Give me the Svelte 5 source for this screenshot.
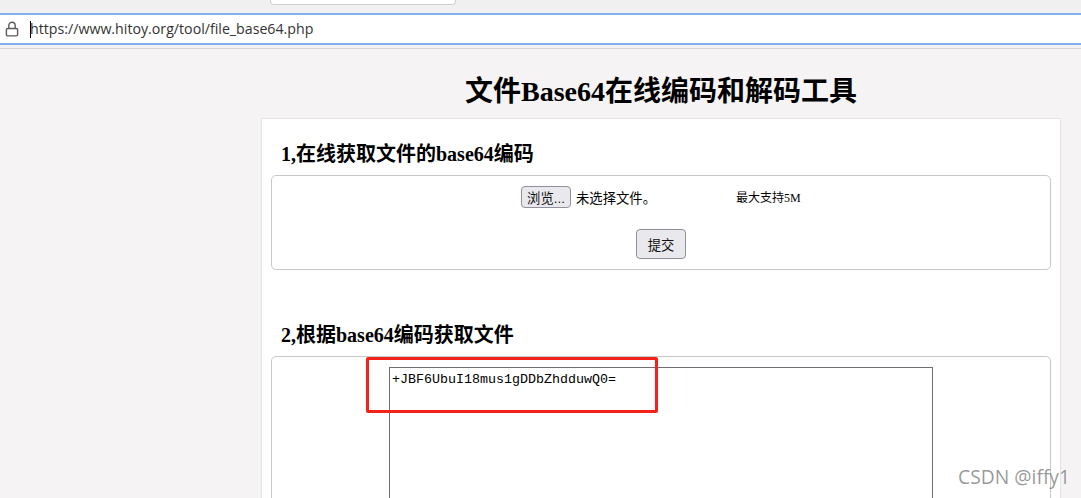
<script lang="ts">
  const url = 'https://www.hitoy.org/tool/file_base64.php';
  const code = '+JBF6UbuI18mus1gDDbZhdduwQ0=';
</script>

<div class="screen">
  <div class="tabstrip">
    <div class="tab"></div>
  </div>
  <div class="urlbar">
    <svg class="lock" width="14" height="16" viewBox="0 0 14 16" fill="none" stroke="#5c5c5c" stroke-width="1.4">
      <path d="M3.8 7.5V4.4a3.2 3.2 0 0 1 6.4 0v3.1" />
      <rect x="1.4" y="7.5" width="11.2" height="7.4" rx="1.4" />
    </svg>
    <span class="caret"></span>
    <span class="url">{url}</span>
  </div>
  <div class="toolbar-gap"></div>

  <main class="page">
    <h1>文件Base64在线编码和解码工具</h1>
    <section class="panel">
      <h2 class="first">1,在线获取文件的base64编码</h2>
      <div class="box upload">
        <div class="file-row">
          <button type="button" class="btn browse">浏览...</button>
          <span class="nofile">未选择文件。</span>
          <span class="limit">最大支持5M</span>
        </div>
        <button type="button" class="btn submit">提交</button>
      </div>

      <h2 class="second">2,根据base64编码获取文件</h2>
      <div class="box decode">
        <div class="textarea">{code}</div>
      </div>
    </section>
  </main>

  <div class="highlight"></div>
  <div class="watermark">CSDN @iffy1</div>
</div>

<style>
  :global(body) {
    margin: 0;
    background: #f5f3f4;
  }

  .screen {
    position: relative;
    width: 1081px;
    height: 498px;
    overflow: hidden;
    background: #f5f3f4;
    font-family: "Liberation Serif", "Noto Sans CJK SC", serif;
    color: #000;
  }

  .tabstrip {
    height: 13px;
    background: #f0f0f0;
    padding-left: 270px;
  }

  .tab {
    width: 184px;
    height: 4px;
    background: #fff;
    border: 1px solid #d0d0d0;
    border-top: none;
    border-radius: 0 0 4px 4px;
  }

  .urlbar {
    display: flex;
    align-items: center;
    height: 28px;
    background: #fff;
    border-top: 2px solid #7fb0ea;
    border-bottom: 2px solid #7fb0ea;
    padding-left: 5px;
  }

  .lock {
    flex: none;
  }

  .caret {
    width: 1px;
    height: 17px;
    margin-left: 11px;
    background: #000;
  }

  .url {
    font-family: "Open Sans", "Noto Sans", sans-serif;
    font-size: 14.2px;
    line-height: 28px;
    height: 28px;
    color: #333;
    margin-left: -1px;
  }

  .toolbar-gap {
    height: 3px;
    border-bottom: 1px solid #d6d6d6;
    background: #f3f3f3;
  }

  .page {
    padding-left: 261px;
  }

  h1 {
    margin: 0;
    width: 800px;
    height: 69px;
    box-sizing: border-box;
    padding-top: 24px;
    text-align: center;
    font-size: 28px;
    line-height: 38px;
    font-weight: bold;
  }

  .panel {
    width: 800px;
    height: 400px;
    box-sizing: border-box;
    background: #fff;
    border: 1px solid #e4e4e4;
    padding: 0 9px;
  }

  h2 {
    margin: 0;
    padding-left: 10px;
    font-size: 20px;
    line-height: 24px;
    font-weight: bold;
  }

  h2.first {
    padding-top: 23px;
    height: 56px;
    box-sizing: border-box;
  }

  h2.second {
    padding-top: 53px;
    height: 86px;
    box-sizing: border-box;
  }

  .box {
    width: 780px;
    box-sizing: border-box;
    border: 1px solid #c8c8c8;
    border-radius: 5px;
  }

  .upload {
    height: 95px;
    display: flex;
    flex-direction: column;
    align-items: center;
    padding-top: 10px;
  }

  .file-row {
    display: flex;
    align-items: center;
    width: 280px;
    font-size: 13.33px;
    height: 22px;
  }

  .btn {
    font-family: "Liberation Sans", "Noto Sans CJK SC", sans-serif;
    font-size: 13.33px;
    color: #111;
    background: #e9e9ed;
    border: 1px solid #8f8f9d;
    border-radius: 4px;
    padding: 0;
  }

  .browse {
    width: 50px;
    height: 22px;
  }

  .nofile {
    margin-left: 5px;
    font-family: "Noto Sans CJK SC", sans-serif;
    width: 160px;
  }

  .limit {
    font-size: 12px;
    white-space: nowrap;
  }

  .submit {
    width: 50px;
    height: 30px;
    margin-top: 21px;
  }

  .decode {
    height: 200px;
    padding: 10px 0 0 117px;
  }

  .textarea {
    width: 544px;
    height: 180px;
    box-sizing: border-box;
    border: 1px solid #6d6d76;
    padding: 3px 2px;
    font-family: "Liberation Mono", monospace;
    font-size: 13.33px;
    line-height: 17px;
  }

  .highlight {
    position: absolute;
    left: 366px;
    top: 357px;
    width: 286px;
    height: 50px;
    border: 3px solid #f5221a;
    border-radius: 2px;
  }

  .watermark {
    position: absolute;
    left: 958px;
    top: 465px;
    font-family: "Open Sans", "Noto Sans", sans-serif;
    font-size: 19.3px;
    line-height: 24px;
    color: rgba(120, 120, 120, 0.75);
    white-space: nowrap;
  }
</style>
